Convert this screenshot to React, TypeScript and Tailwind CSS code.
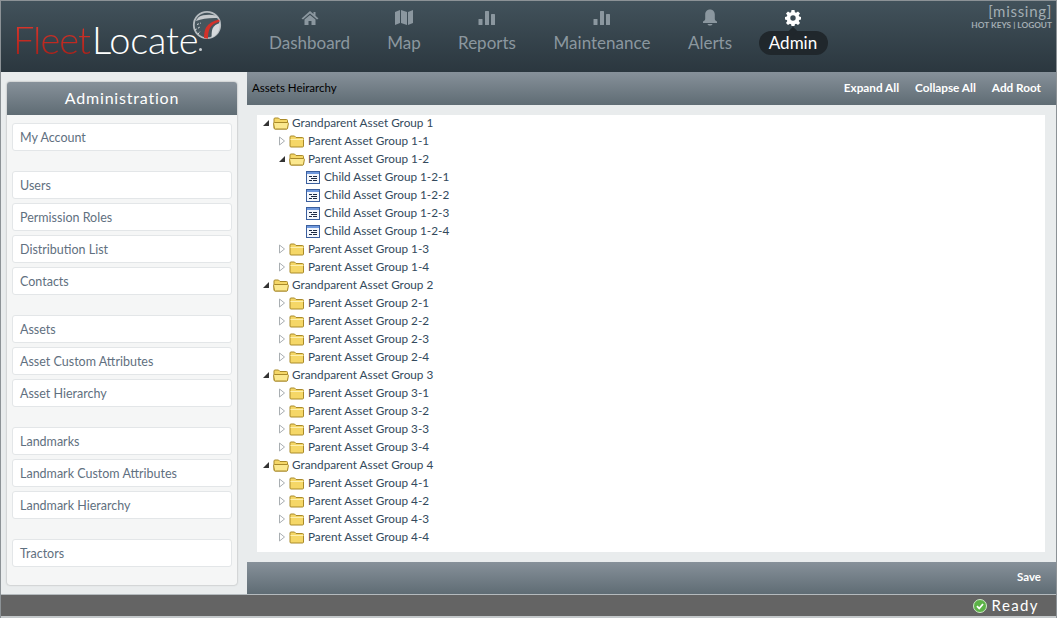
import { Fragment } from "react";

const font = "font-['Lato','Noto_Sans',sans-serif]";

const navItems = [
  { label: "Dashboard", icon: "home", width: "w-[117px]" },
  { label: "Map", icon: "map", width: "w-[72px]" },
  { label: "Reports", icon: "bars", width: "w-[94px]" },
  { label: "Maintenance", icon: "bars", width: "w-[136px]" },
  { label: "Alerts", icon: "bell", width: "w-[80px]" },
  { label: "Admin", icon: "gear", width: "w-[86px]", active: true },
];

const menuGroups = [
  ["My Account"],
  ["Users", "Permission Roles", "Distribution List", "Contacts"],
  ["Assets", "Asset Custom Attributes", "Asset Hierarchy"],
  ["Landmarks", "Landmark Custom Attributes", "Landmark Hierarchy"],
  ["Tractors"],
];

const NavIcon = ({ name, active }: { name: string; active?: boolean }) => {
  const fill = active ? "#ffffff" : "#8b979f";
  if (name === "home")
    return (
      <svg width="18" height="16" viewBox="0 0 18 16">
        <path fill={fill} d="M9 1 0.5 8.5 2 9.500 9 3.600 16 9.500 17.500 8.500 14.500 5.800V2h-2v2L9 1Z" />
        <path fill={fill} d="M9 5 3.500 9.600V15h4v-4h3v4h4V9.600L9 5Z" />
      </svg>
    );
  if (name === "map")
    return (
      <svg width="18" height="17" viewBox="0 0 18 17">
        <path fill={fill} d="M0 3 5 1v13l-5 2V3Zm6-2 6 2v13l-6-2V1Zm7 2 5-2v13l-5 2V3Z" />
      </svg>
    );
  if (name === "bars")
    return (
      <svg width="18" height="16" viewBox="0 0 18 16">
        <rect fill={fill} x="0.500" y="9" width="4" height="6" rx="0.500" />
        <rect fill={fill} x="7" y="1" width="4" height="14" rx="0.500" />
        <rect fill={fill} x="13" y="4" width="4" height="11" rx="0.500" />
      </svg>
    );
  if (name === "bell")
    return (
      <svg width="16" height="17" viewBox="0 0 16 17">
        <path fill={fill} d="M8 0.500c-3 0-4.800 2.200-4.800 5V10c0 1-1 2-2.200 2.600V14h14v-1.400C13.800 12 12.800 11 12.800 10V5.500C12.800 2.700 11 .5 8 .5Z" />
        <path fill={fill} d="M5.500 15h5c-.4 1-1.300 1.500-2.500 1.500S5.900 16 5.500 15Z" />
      </svg>
    );
  return (
    <svg width="16" height="16" viewBox="0 0 16 16">
      <path
        fillRule="evenodd"
        fill={fill}
        d="M6.500 0h3l.4 2.200 1.200.5L13 1.400l2 2-1.300 1.900.5 1.200L16 6.900v2.600l-1.800.4-.5 1.200 1.300 1.900-2 2-1.900-1.300-1.200.5L9.500 16h-3l-.4-1.800-1.200-.5L3 15l-2-2 1.300-1.900-.5-1.200L0 9.500V6.900l1.800-.4.5-1.200L1 3.400l2-2 1.900 1.300 1.200-.5L6.500 0ZM8 5.300a2.700 2.700 0 1 0 0 5.400 2.700 2.700 0 0 0 0-5.400Z"
      />
    </svg>
  );
};

const Logo = () => (
  <div className="relative h-[71px] w-[250px] shrink-0">
    <div className="absolute left-[12px] top-[19px] flex items-start text-[38px] font-light leading-[38px]">
      <span className="bg-gradient-to-b from-[#e2392e] to-[#a81f18] bg-clip-text tracking-[-1px] text-transparent">Fleet</span>
      <span className="ml-[2px] tracking-[-0.2px] text-white">Locate</span>
      <span className="ml-[1px] mt-[28px] h-[3px] w-[3px] rounded-full bg-[#c8ced2]" />
    </div>
    <svg className="absolute left-[191px] top-[9px]" width="30" height="30" viewBox="0 0 30 30">
      <circle cx="15" cy="15" r="13.200" fill="#46555d" stroke="#b5bbbf" strokeWidth="1.800" />
      <path d="M4 11c6-2.500 14-3.500 22.500-3-.8-1-1.500-1.800-2.500-2.500C17 4 10 5 6.800 7 6 8 4.500 9 4 11Z" fill="#c5c9cc" />
      <path d="M27 9.500c-6 1.500-10.500 4-13 8-1.200 2.500-2 6-2 10.500l4 .8c0-4.500 .5-8 2-10.800 1.700-3 5-5.200 9.800-6.500L27 9.500Z" fill="#d2322a" />
      <path d="M27.800 13c-3.500 1.200-5.800 2.800-7 5-1 2-1.300 5.500-1.200 9.500 3-1 5.500-3.500 7-6.500 1-2.500 1.500-5.500 1.200-8Z" fill="#d7dadc" />
      <path d="M5 14.500 9 13M3 20l5-3M6 24l2.500-3" stroke="#d7dadc" strokeWidth="1" strokeDasharray="2 1.500" fill="none" />
    </svg>
  </div>
);

const Header = () => (
  <header className="relative flex h-[71px] shrink-0 bg-gradient-to-b from-[#42525b] to-[#2b373f]">
    <Logo />
    <nav className="flex">
      {navItems.map((item) => (
        <div key={item.label} className={`flex flex-col items-center ${item.width}`}>
          <div className="mt-[8px] flex h-[17px] items-center justify-center">
            <NavIcon name={item.icon} active={item.active} />
          </div>
          {item.active ? (
            <div className="relative mt-[5px] flex h-[24px] w-[69px] items-center justify-center rounded-full bg-[#20272c] text-[17px] text-white">
              <span className="absolute left-1/2 top-[-3px] h-[6px] w-[6px] -translate-x-1/2 rotate-45 bg-[#20272c]" />
              <span className="relative">{item.label}</span>
            </div>
          ) : (
            <div className="mt-[5px] flex h-[24px] items-center text-[17px] text-[#8b979f]">{item.label}</div>
          )}
        </div>
      ))}
    </nav>
    <div className="absolute right-[4px] top-[1px] flex flex-col items-end">
      <span className="text-[15px] leading-[18px] tracking-[0.7px] text-[#a3adb3]">[missing]</span>
      <span className="text-[8.300px] font-bold leading-[10px] text-[#a3adb3]">HOT KEYS | LOGOUT</span>
    </div>
  </header>
);

const Sidebar = () => (
  <aside className="mb-[9px] ml-[6px] mt-[10px] flex w-[230px] shrink-0 flex-col rounded-[3px] bg-[#f5f6f6] shadow-[0_0_2px_rgba(0,0,0,0.35)]">
    <div className="flex h-[33px] shrink-0 items-center justify-center rounded-t-[3px] bg-gradient-to-b from-[#87919a] to-[#5f6c74] pb-[2px] text-[16px] tracking-[0.8px] text-white">
      Administration
    </div>
    <div className="flex flex-col gap-[20px] px-[5px] pt-[8px]">
      {menuGroups.map((group) => (
        <div key={group[0]} className="flex flex-col gap-[4px]">
          {group.map((item) => (
            <div
              key={item}
              className="flex h-[28px] items-center rounded-[3px] border border-[#e3e6e8] bg-white pl-[7px] pt-[2px] text-[12.500px] text-[#5f7080]"
            >
              {item}
            </div>
          ))}
        </div>
      ))}
    </div>
  </aside>
);

const Toolbar = ({ height, children }: { height: string; children: React.ReactNode }) => (
  <div className={`flex shrink-0 items-center bg-gradient-to-b from-[#87919a] to-[#5f6c74] pb-[2px] pr-[15px] ${height}`}>
    {children}
  </div>
);

const FolderIcon = ({ open }: { open?: boolean }) => (
  <svg width="16" height="13" viewBox="0 0 16 13" className="shrink-0">
    <path d="M1 3V2a1 1 0 0 1 1-1h3.500l1.500 1.500h6.500a1 1 0 0 1 1 1V11a1 1 0 0 1-1 1H2a1 1 0 0 1-1-1V3Z" fill="#f5d767" stroke="#a98a2a" />
    {open ? (
      <path d="M.6 6.500a1 1 0 0 1 1-1h12.800a1 1 0 0 1 1 1L14.500 11.500a1 1 0 0 1-1 .5H2.500a1 1 0 0 1-1-.5L.6 6.500Z" fill="#fbe88e" stroke="#a98a2a" />
    ) : (
      <path d="M1.500 4.500h13" stroke="#fdf0b0" />
    )}
  </svg>
);

const ChildIcon = () => (
  <svg width="14" height="13" viewBox="0 0 14 13" className="shrink-0">
    <rect x="0.500" y="0.500" width="13" height="12" fill="#f4f7fc" stroke="#3b5f9e" />
    <rect x="1" y="1" width="12" height="2" fill="#6f98dc" />
    <path d="M3 5.500h3M7 5.500h4M5 7.500h6M3 9.500h3M7 9.500h4" stroke="#1c2a44" />
  </svg>
);

const Expander = ({ open }: { open?: boolean }) =>
  open ? (
    <svg width="8" height="8" viewBox="0 0 8 8" className="shrink-0">
      <path d="M7 1v6H1Z" fill="#333" />
    </svg>
  ) : (
    <svg width="8" height="10" viewBox="0 0 8 10" className="shrink-0">
      <path d="M1.500 1 6.500 5 1.500 9Z" fill="#fff" stroke="#a9aeb2" />
    </svg>
  );

const TreeRow = ({
  depth,
  label,
  kind,
}: {
  depth: "root" | "parent" | "child";
  label: string;
  kind: "open" | "closed" | "leaf";
}) => {
  const pad = depth === "root" ? "pl-[4px]" : depth === "parent" ? "pl-[20px]" : "pl-[49px]";
  return (
    <div className={`flex h-[18px] items-center text-[11.750px] text-[#33495c] ${pad}`}>
      {kind !== "leaf" && (
        <span className="flex w-[12px] justify-start pl-[1px]">
          <Expander open={kind === "open"} />
        </span>
      )}
      {kind === "leaf" ? <ChildIcon /> : <FolderIcon open={kind === "open"} />}
      <span className={kind === "leaf" ? "ml-[4px]" : "ml-[3px]"}>{label}</span>
    </div>
  );
};

const Tree = () => (
  <div className="flex flex-col">
    {[1, 2, 3, 4].map((g) => (
      <Fragment key={g}>
        <TreeRow depth="root" kind="open" label={`Grandparent Asset Group ${g}`} />
        {[1, 2, 3, 4].map((p) =>
          g === 1 && p === 2 ? (
            <Fragment key={p}>
              <TreeRow depth="parent" kind="open" label={`Parent Asset Group ${g}-${p}`} />
              {[1, 2, 3, 4].map((c) => (
                <TreeRow key={c} depth="child" kind="leaf" label={`Child Asset Group ${g}-${p}-${c}`} />
              ))}
            </Fragment>
          ) : (
            <TreeRow key={p} depth="parent" kind="closed" label={`Parent Asset Group ${g}-${p}`} />
          ),
        )}
      </Fragment>
    ))}
  </div>
);

const StatusBar = () => (
  <footer className="flex h-[21px] shrink-0 items-center justify-end bg-[#646464] pr-[17px]">
    <svg width="14" height="14" viewBox="0 0 14 14">
      <circle cx="7" cy="7" r="6.500" fill="#5cb247" stroke="#cfe8c8" />
      <path d="M4 7.200 6.200 9.500 10 5" stroke="#fff" strokeWidth="1.800" fill="none" />
    </svg>
    <span className="ml-[5px] text-[15px] tracking-[1.400px] text-white">Ready</span>
  </footer>
);

export default function App() {
  return (
    <div className={`flex h-[618px] w-[1057px] flex-col overflow-hidden border-x border-t border-[#8c9296] bg-[#e9eced] ${font}`}>
      <Header />
      <div className="flex min-h-0 flex-1">
        <Sidebar />
        <main className="ml-[10px] flex min-w-0 flex-1 flex-col">
          <Toolbar height="h-[33px]">
            <span className="ml-[5px] text-[11.500px] text-black">Assets Heirarchy</span>
            <div className="ml-auto flex gap-[16px] text-[11.750px] font-bold text-white">
              <span>Expand All</span>
              <span>Collapse All</span>
              <span>Add Root</span>
            </div>
          </Toolbar>
          <div className="ml-[10px] mr-[11px] mt-[10px] flex-1 bg-white">
            <div className="-mt-[1px]">
              <Tree />
            </div>
          </div>
          <div className="mt-[10px]">
            <Toolbar height="h-[32px]">
              <span className="ml-auto text-[11.500px] font-bold text-white">Save</span>
            </Toolbar>
          </div>
        </main>
      </div>
      <div className="h-px shrink-0 bg-[#b4babd]" />
      <StatusBar />
      <div className="h-[2px] shrink-0 bg-[#c4c8ca]" />
    </div>
  );
}
